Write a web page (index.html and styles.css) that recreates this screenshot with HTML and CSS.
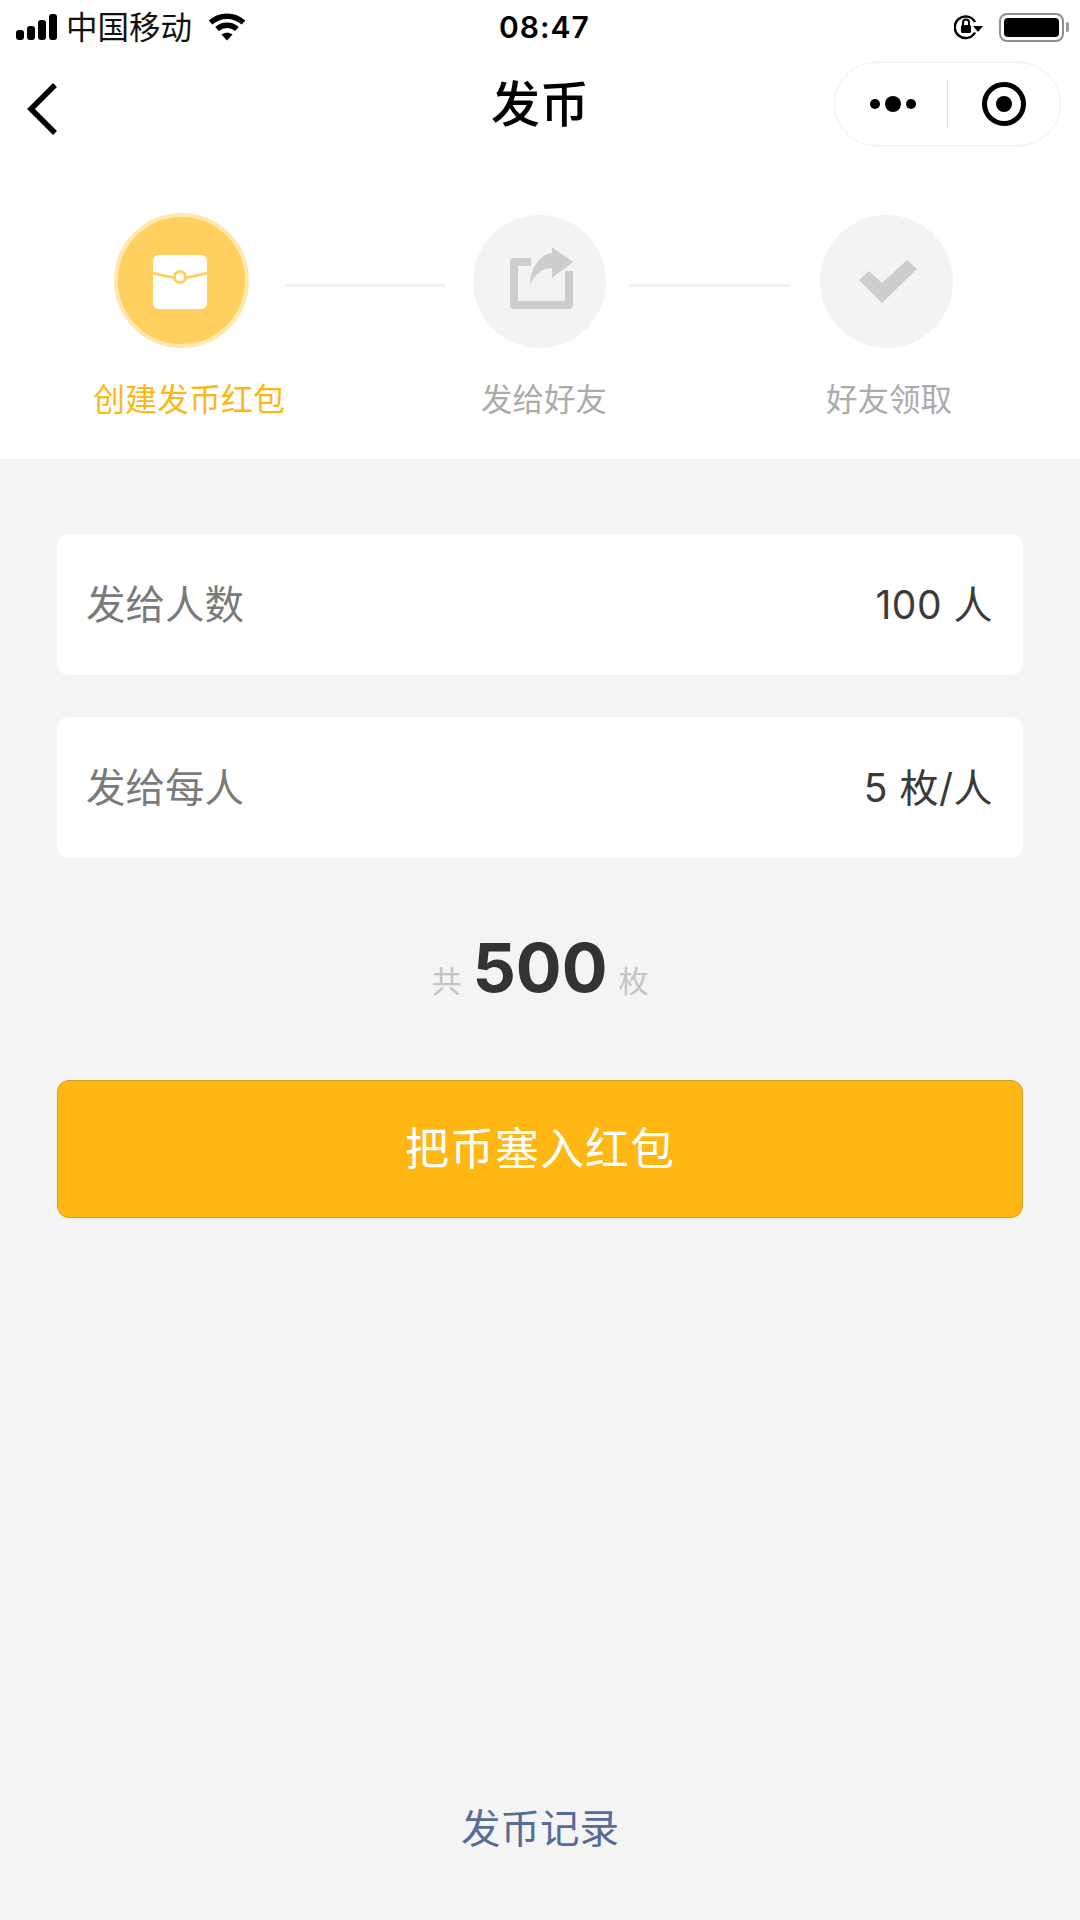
FILE: index.html
```html
<!DOCTYPE html>
<html lang="zh-CN">
<head>
    <meta charset="UTF-8">
    <meta name="viewport" content="width=device-width, initial-scale=1.0">
    <title>发币</title>
    <link rel="stylesheet" href="styles.css">
</head>
<body>
    <div class="page">
        <div class="header">
            <div class="statusbar">
                <div class="status-left">
                    <svg class="signal" width="44" height="28" viewBox="0 0 44 28">
                        <rect x="1" y="17" width="8" height="10" rx="3" fill="#000"/>
                        <rect x="12" y="13" width="8" height="14" rx="3" fill="#000"/>
                        <rect x="23" y="7" width="8" height="20" rx="3" fill="#000"/>
                        <rect x="34" y="1" width="8" height="26" rx="3" fill="#000"/>
                    </svg>
                    <span class="carrier">中国移动</span>
                    <svg class="wifi" width="38" height="28" viewBox="0 0 38 28">
                        <path d="M2.500 9.500C12 1 26 1 35.500 9.500" fill="none" stroke="#000" stroke-width="5.500"/>
                        <path d="M9 16C15 11 23 11 29 16" fill="none" stroke="#000" stroke-width="5.500"/>
                        <path d="M13.500 21.500C17 19 21 19 24.500 21.500L19 27.500Z" fill="#000"/>
                    </svg>
                </div>
                <span class="time">08:47</span>
                <div class="status-right">
                    <svg width="30" height="28" viewBox="0 0 30 28">
                        <path d="M21 9A10.800 10.800 0 1 0 21 19.500" fill="none" stroke="#000" stroke-width="2.500"/>
                        <path d="M19 13H29L24 19Z" fill="#000"/>
                        <rect x="7" y="12" width="10" height="8" rx="1.500" fill="#000"/>
                        <path d="M9 13V9.500A3 3 0 0 1 15 9.500V13" fill="none" stroke="#000" stroke-width="2"/>
                    </svg>
                    <div class="battery"><div class="battery-fill"></div></div>
                    <div class="battery-tip"></div>
                </div>
            </div>
            <div class="navbar">
                <svg class="back" width="34" height="54" viewBox="0 0 34 54">
                    <path d="M29 3L5 27L29 51" fill="none" stroke="#000" stroke-width="5.500"/>
                </svg>
                <h1 class="nav-title">发币</h1>
                <div class="capsule">
                    <div class="capsule-more">
                        <span class="dot"></span><span class="dot dot-big"></span><span class="dot"></span>
                    </div>
                    <div class="capsule-line"></div>
                    <div class="capsule-close"><div class="capsule-inner"></div></div>
                </div>
            </div>
            <div class="steps">
                <div class="step-circle step-on">
                    <svg class="icon-packet" width="54" height="54" viewBox="0 0 54 54">
                        <rect x="0" y="0" width="54" height="54" rx="6" fill="#fff"/>
                        <path d="M0 18C8 20 15 22 22 22.500M32 22.500C39 22 46 20 54 18" fill="none" stroke="#ffd060" stroke-width="3"/>
                        <circle cx="27" cy="22" r="5.500" fill="#fff" stroke="#ffd060" stroke-width="3"/>
                    </svg>
                </div>
                <div class="step-line step-line-a"></div>
                <div class="step-circle">
                    <svg class="icon-share" width="66" height="66" viewBox="0 0 66 66">
                        <path d="M23 17H6V60H61V26" fill="none" stroke="#cdcdcd" stroke-width="8" stroke-linejoin="round"/>
                        <path d="M22 40C22 24 32 9 44 8V2L65 17L44 33V23C34 23 27 29 22 40Z" fill="#cdcdcd"/>
                    </svg>
                </div>
                <div class="step-line step-line-b"></div>
                <div class="step-circle">
                    <svg class="icon-check" width="58" height="44" viewBox="0 0 58 44">
                        <path d="M0 20L10 11L23 23L48 0L58 9L23 43Z" fill="#cdcdcd"/>
                    </svg>
                </div>
            </div>
            <div class="step-labels">
                <span class="step-label step-label-on">创建发币红包</span>
                <span class="step-label">发给好友</span>
                <span class="step-label">好友领取</span>
            </div>
        </div>
        <div class="content">
            <div class="row">
                <span class="row-name">发给人数</span>
                <span class="row-value">100 人</span>
            </div>
            <div class="row">
                <span class="row-name">发给每人</span>
                <span class="row-value">5 枚/人</span>
            </div>
            <div class="total">
                <span class="total-unit">共</span>
                <span class="total-num">500</span>
                <span class="total-unit">枚</span>
            </div>
            <button class="submit" type="button">把币塞入红包</button>
            <a class="records" href="#">发币记录</a>
        </div>
    </div>
</body>
</html>
```

FILE: styles.css
```css
* {
    box-sizing: border-box;
}

body {
    margin: 0;
    padding: 0;
    font-family: "Noto Sans CJK SC", sans-serif;
    background-color: #f4f4f4;
}

.page {
    width: 1080px;
    height: 1920px;
    display: flex;
    flex-direction: column;
}

.header {
    height: 459px;
    background-color: #fff;
}

.statusbar {
    height: 54px;
    padding: 0 11px 0 15px;
    display: flex;
    align-items: center;
    justify-content: space-between;
    position: relative;
}

.status-left {
    display: flex;
    align-items: center;
}

.carrier {
    margin-left: 7px;
    margin-top: -4px;
    font-size: 31.5px;
    line-height: 40px;
    color: #111;
}

.wifi {
    margin-left: 16px;
}

.time {
    position: absolute;
    left: 499px;
    top: 7px;
    font-family: Inter, sans-serif;
    font-size: 30px;
    line-height: 40px;
    font-weight: 600;
    letter-spacing: 1px;
    color: #000;
}

.status-right {
    display: flex;
    align-items: center;
}

.battery {
    margin-left: 15px;
    width: 65px;
    height: 29px;
    padding: 3px;
    border: 2px solid #8f8f8f;
    border-radius: 8px;
}

.battery-fill {
    height: 100%;
    background-color: #000;
    border-radius: 4px;
}

.battery-tip {
    margin-left: 2px;
    width: 3px;
    height: 10px;
    background-color: #9a9a9a;
    border-radius: 0 2px 2px 0;
}

.navbar {
    height: 100px;
    padding: 0 19px 0 26px;
    display: flex;
    align-items: center;
    justify-content: space-between;
    position: relative;
}

.back {
    margin-top: 10px;
}

.nav-title {
    position: absolute;
    left: 0;
    right: 0;
    top: 11px;
    margin: 0;
    text-align: center;
    font-size: 49px;
    line-height: 72px;
    font-weight: 500;
    color: #000;
}

.capsule {
    width: 227px;
    height: 84px;
    border: 1px solid #efefef;
    border-radius: 42px;
    display: flex;
    align-items: center;
}

.capsule-more {
    width: 112px;
    padding-left: 4px;
    display: flex;
    align-items: center;
    justify-content: center;
    gap: 5px;
}

.dot {
    width: 10px;
    height: 10px;
    border-radius: 50%;
    background-color: #000;
}

.dot-big {
    width: 16px;
    height: 16px;
}

.capsule-line {
    width: 1px;
    height: 48px;
    background-color: #dcdcdc;
}

.capsule-close {
    width: 44px;
    height: 44px;
    margin-left: 34px;
    border: 5px solid #000;
    border-radius: 50%;
    display: flex;
    align-items: center;
    justify-content: center;
}

.capsule-inner {
    width: 16px;
    height: 16px;
    background-color: #000;
    border-radius: 50%;
}

.steps {
    margin-top: 61px;
    padding-left: 114px;
    display: flex;
    align-items: center;
}

.step-circle {
    width: 133px;
    height: 133px;
    border-radius: 50%;
    background-color: #f3f3f3;
    display: flex;
    align-items: center;
    justify-content: center;
    flex-shrink: 0;
}

.step-on {
    width: 135px;
    height: 135px;
    margin-top: -2px;
    background-color: #ffd060;
    border: 4px solid #ffe7ae;
}

.icon-packet {
    margin: 2px 3px 0 0;
}

.icon-share {
    margin: 0 0 7px 3px;
}

.icon-check {
    margin-left: 2px;
}

.step-line {
    width: 160px;
    height: 3px;
    margin-top: 8px;
    background-color: #f1f1f1;
}

.step-line-a {
    margin-left: 36px;
    margin-right: 28px;
}

.step-line-b {
    margin-left: 24px;
    margin-right: 30px;
}

.step-labels {
    margin-top: 26px;
    padding-left: 93px;
    display: flex;
    font-size: 31.5px;
    line-height: 46px;
}

.step-label {
    color: #ababab;
    white-space: nowrap;
}

.step-label:nth-child(2) {
    margin-left: 196px;
}

.step-label:nth-child(3) {
    margin-left: 219px;
}

.step-label-on {
    font-size: 32px;
    color: #fdb813;
}

.content {
    flex: 1;
    padding: 75px 57px 0;
    display: flex;
    flex-direction: column;
}

.row {
    height: 141px;
    margin-bottom: 42px;
    padding: 0 30px 6px 29px;
    background-color: #fff;
    border-radius: 12px;
    display: flex;
    align-items: center;
    justify-content: space-between;
    font-size: 39.5px;
}

.row-name {
    color: #7a7a7a;
}

.row-value {
    color: #3a3a3a;
    font-size: 39px;
    letter-spacing: 0.5px;
    font-family: Inter, "Noto Sans CJK SC", sans-serif;
}

.total {
    margin-top: 24px;
    height: 92px;
    display: flex;
    align-items: baseline;
    justify-content: center;
    gap: 11px;
}

.total-unit {
    font-size: 30px;
    color: #c4c4c4;
}

.total-num {
    font-family: Inter, sans-serif;
    font-size: 68px;
    line-height: 87px;
    font-weight: 700;
    color: #333;
}

.submit {
    margin-top: 64px;
    height: 138px;
    padding-bottom: 8px;
    border: 1px solid #d09f26;
    border-radius: 12px;
    background-color: #feb713;
    color: #fff;
    font-family: inherit;
    font-size: 44px;
    letter-spacing: 1px;
}

.records {
    margin-top: auto;
    margin-bottom: 66px;
    text-align: center;
    font-size: 39.5px;
    line-height: 56px;
    color: #576b95;
    text-decoration: none;
}
```
